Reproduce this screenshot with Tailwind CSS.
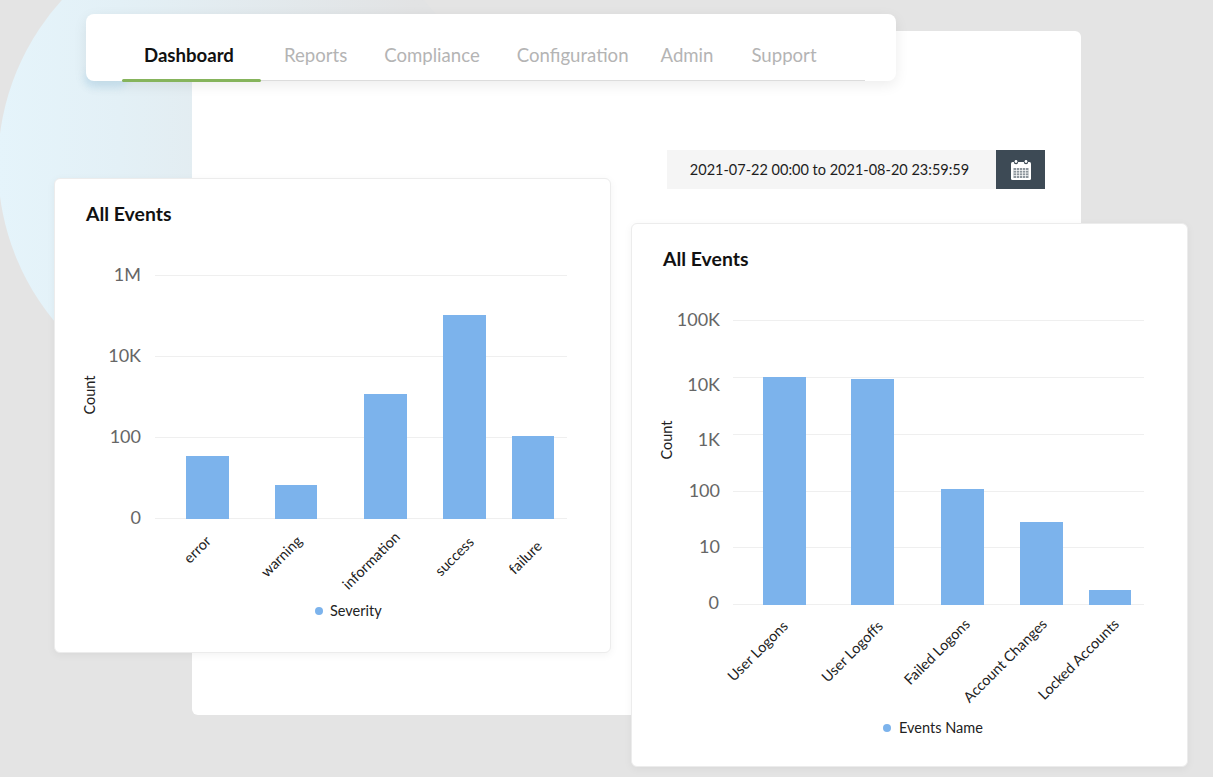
<!DOCTYPE html>
<html lang="en">
<head>
    <meta charset="UTF-8">
    <title>Dashboard</title>
    <script src="https://cdn.jsdelivr.net/npm/@tailwindcss/browser@4"></script>
</head>
<body class="relative w-[1213px] h-[777px] overflow-hidden bg-[#e4e4e4] font-['Lato',sans-serif]">
    <!-- backdrop circle -->
    <div class="absolute left-[-2px] top-[-80px] w-[490px] h-[490px] rounded-full bg-gradient-to-r from-[#e5f4fb] via-[#e3f0f6] via-25% to-[#e2e3e4] to-85%"></div>
    <div class="absolute left-[84px] top-[68px] w-[44px] h-[20px] rounded-full bg-[#cfe8f5] blur-[3px]"></div>

    <!-- back panel -->
    <section class="absolute left-[192px] top-[31px] w-[889px] h-[684px] rounded-[6px] bg-white pt-[119px] pr-[36px] flex justify-end items-start">
        <div class="flex h-[39px]">
            <div class="w-[329px] pr-[4px] flex items-center justify-center bg-[#f5f5f5] text-[14.5px] text-[#1d1d1d]">2021-07-22 00:00 to 2021-08-20 23:59:59</div>
            <div class="w-[49px] flex items-center justify-center bg-[#3d4a55]">
                <svg class="w-[22px] h-[22px]" viewBox="0 0 22 22">
                    <rect x="1" y="3" width="20" height="18" rx="1.500" fill="#fff"/>
                    <rect x="3.500" y="9" width="15" height="10" fill="#8d959c"/>
                    <path d="M3.500 11.500H18.500M3.500 14H18.500M3.500 16.500H18.500M6.500 9V19M9.500 9V19M12.500 9V19M15.500 9V19" stroke="#fff" stroke-width="0.700" fill="none"/>
                    <circle cx="6" cy="3" r="2.200" fill="#3d4a55"/>
                    <circle cx="16" cy="3" r="2.200" fill="#3d4a55"/>
                    <circle cx="6" cy="2.500" r="1.400" fill="#fff"/>
                    <circle cx="16" cy="2.500" r="1.400" fill="#fff"/>
                </svg>
            </div>
        </div>
    </section>

    <!-- top nav -->
    <nav class="absolute left-[86px] top-[14px] w-[810px] h-[67px] rounded-[8px] bg-white shadow-[0_4px_14px_rgba(0,0,0,0.08)] flex items-center pt-[16px] text-[18.600px] text-[#b4b4b4]">
        <span class="ml-[58px] font-bold text-[#111]">Dashboard</span>
        <span class="ml-[50px]">Reports</span>
        <span class="ml-[37px]">Compliance</span>
        <span class="ml-[37px]">Configuration</span>
        <span class="ml-[32px]">Admin</span>
        <span class="ml-[38px]">Support</span>
        <div class="absolute left-[36px] right-[31px] bottom-[0px] h-px bg-[#dcdcdc]"></div>
        <div class="absolute left-[36px] bottom-[-1px] w-[139px] h-[3px] rounded-full bg-[#86b45c]"></div>
    </nav>

    <!-- severity card -->
    <section class="absolute left-[54px] top-[178px] w-[557px] h-[475px] rounded-[6px] bg-white border border-[#ececec] shadow-[0_2px_8px_rgba(0,0,0,0.05)]">
        <h3 class="pl-[31px] pt-[23px] h-[61px] text-[19.400px] leading-[24px] font-bold text-[#111]">All Events</h3>
        <svg class="block w-[555px] h-[412px]" viewBox="55 240 555 412" font-family="Lato, sans-serif">
            <g stroke="#efefef" stroke-width="1">
                <path d="M155 275.500H567M155 356.500H567M155 437.500H567M155 518.500H567"/>
            </g>
            <g fill="#666" font-size="18" text-anchor="end">
                <text x="141" y="281">1M</text>
                <text x="141" y="362">10K</text>
                <text x="141" y="443">100</text>
                <text x="141" y="524">0</text>
            </g>
            <text transform="translate(95 395) rotate(-90)" text-anchor="middle" font-size="14.500" fill="#222">Count</text>
            <g fill="#7cb3ec">
                <rect x="186" y="456" width="43" height="63"/>
                <rect x="275" y="485" width="42" height="34"/>
                <rect x="364" y="394" width="43" height="125"/>
                <rect x="443" y="315" width="43" height="204"/>
                <rect x="512" y="436" width="42" height="83"/>
            </g>
            <g fill="#222" font-size="14.500" text-anchor="end">
                <text transform="translate(212 542) rotate(-45)">error</text>
                <text transform="translate(303 542) rotate(-45)">warning</text>
                <text transform="translate(401 538) rotate(-45)">information</text>
                <text transform="translate(475 543) rotate(-45)">success</text>
                <text transform="translate(543 547) rotate(-45)">failure</text>
            </g>
            <circle cx="319" cy="611" r="4" fill="#7cb3ec"/>
            <text x="330" y="616" font-size="14.500" fill="#222">Severity</text>
        </svg>
    </section>

    <!-- events name card -->
    <section class="absolute left-[631px] top-[223px] w-[557px] h-[544px] rounded-[6px] bg-white border border-[#ececec] shadow-[0_2px_8px_rgba(0,0,0,0.05)]">
        <h3 class="pl-[31px] pt-[23px] h-[61px] text-[19.400px] leading-[24px] font-bold text-[#111]">All Events</h3>
        <svg class="block w-[555px] h-[481px]" viewBox="632 285 555 481" font-family="Lato, sans-serif">
            <g stroke="#efefef" stroke-width="1">
                <path d="M733 320.500H1144M733 377.500H1144M733 434.500H1144M733 491.500H1144M733 547.500H1144M733 604.500H1144"/>
            </g>
            <g fill="#666" font-size="18" text-anchor="end">
                <text x="720" y="326">100K</text>
                <text x="720" y="391">10K</text>
                <text x="720" y="446">1K</text>
                <text x="720" y="497">100</text>
                <text x="720" y="553">10</text>
                <text x="719" y="609">0</text>
            </g>
            <text transform="translate(672 440) rotate(-90)" text-anchor="middle" font-size="14.500" fill="#222">Count</text>
            <g fill="#7cb3ec">
                <rect x="763" y="377" width="43" height="228"/>
                <rect x="851" y="379" width="43" height="226"/>
                <rect x="941" y="489" width="43" height="116"/>
                <rect x="1020" y="522" width="43" height="83"/>
                <rect x="1089" y="590" width="42" height="15"/>
            </g>
            <g fill="#222" font-size="14.500" text-anchor="end">
                <text transform="translate(789 627) rotate(-45)">User Logons</text>
                <text transform="translate(884 627) rotate(-45)">User Logoffs</text>
                <text transform="translate(971 625) rotate(-45)">Failed Logons</text>
                <text transform="translate(1048 625) rotate(-45)">Account Changes</text>
                <text transform="translate(1120 625) rotate(-45)">Locked Accounts</text>
            </g>
            <circle cx="887" cy="728" r="4" fill="#7cb3ec"/>
            <text x="899" y="733" font-size="14.500" fill="#222">Events Name</text>
        </svg>
    </section>
</body>
</html>
